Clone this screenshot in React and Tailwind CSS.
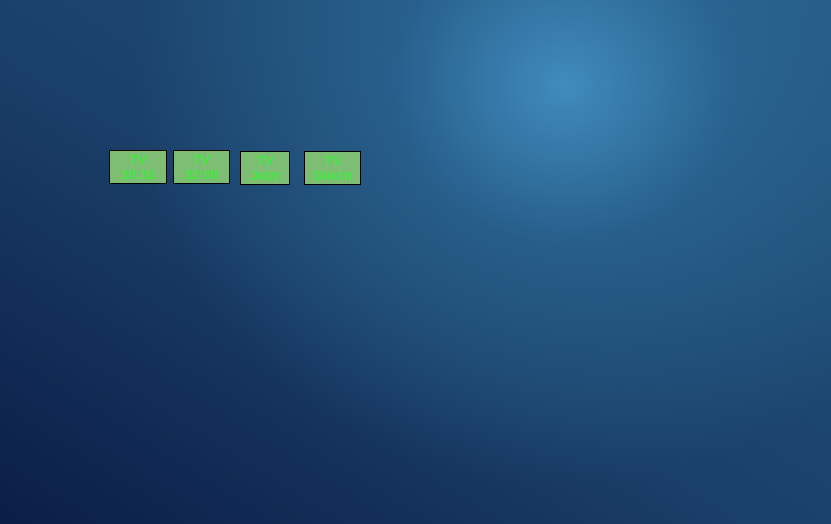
const buttons = [
  { line: "20:15", w: "w-[58px]", h: "h-[34px]", ml: "ml-[109px]", mt: "mt-0" },
  { line: "22:00", w: "w-[57px]", h: "h-[34px]", ml: "ml-[6px]", mt: "mt-0" },
  { line: "Jetzt", w: "w-[50px]", h: "h-[34px]", ml: "ml-[10px]", mt: "mt-[1px]" },
  { line: "Gleich", w: "w-[57px]", h: "h-[34px]", ml: "ml-[14px]", mt: "mt-[1px]" },
];

export default function App() {
  return (
    <div className="w-[831px] h-[524px] overflow-hidden bg-[radial-gradient(ellipse_430px_400px_at_565px_85px,rgba(66,142,192,0.95)_0%,rgba(46,110,155,0.6)_40%,rgba(35,90,130,0)_100%),linear-gradient(to_top_right,#0b1d48_0%,#1a3f68_45%,#235781_100%)] font-['Liberation_Sans',Arial,sans-serif]">
      <div className="flex items-start pt-[150px]">
        {buttons.map((b) => (
          <button
            key={b.line}
            className={`${b.w} ${b.h} ${b.ml} ${b.mt} shrink-0 border border-black bg-[#7dbe74] text-[#45e645] text-[13px] leading-[15px] font-bold flex flex-col items-center justify-center`}
          >
            <span>TV</span>
            <span>{b.line}</span>
          </button>
        ))}
      </div>
    </div>
  );
}
